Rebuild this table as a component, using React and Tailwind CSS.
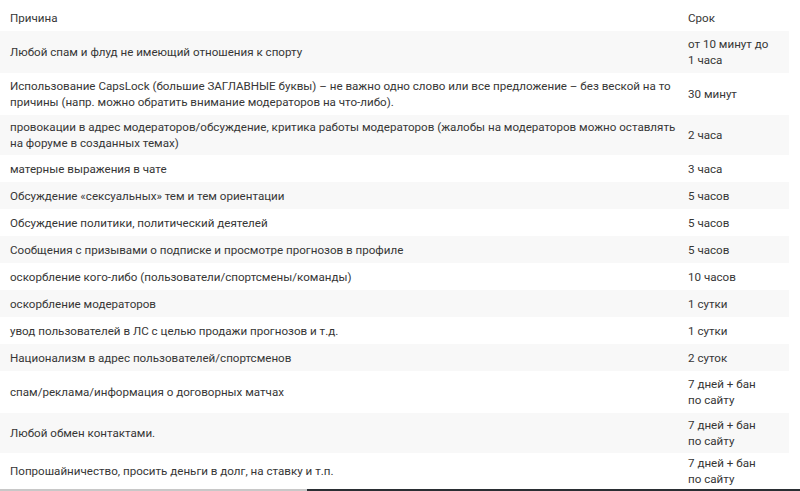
import React from "react";

const rows = [
  ["Любой спам и флуд не имеющий отношения к спорту", "от 10 минут до 1 часа", "h-[42px]"],
  ["Использование CapsLock (большие ЗАГЛАВНЫЕ буквы) – не важно одно слово или все предложение – без веской на то причины (напр. можно обратить внимание модераторов на что-либо).", "30 минут", "h-[42px]"],
  ["провокации в адрес модераторов/обсуждение, критика работы модераторов (жалобы на модераторов можно оставлять на форуме в созданных темах)", "2 часа", "h-[40px]"],
  ["матерные выражения в чате", "3 часа", "h-[27px]"],
  ["Обсуждение «сексуальных» тем и тем ориентации", "5 часов", "h-[27px]"],
  ["Обсуждение политики, политический деятелей", "5 часов", "h-[27px]"],
  ["Сообщения с призывами о подписке и просмотре прогнозов в профиле", "5 часов", "h-[27px]"],
  ["оскорбление кого-либо (пользователи/спортсмены/команды)", "10 часов", "h-[27px]"],
  ["оскорбление модераторов", "1 сутки", "h-[27px]"],
  ["увод пользователей в ЛС с целью продажи прогнозов и т.д.", "1 сутки", "h-[27px]"],
  ["Национализм в адрес пользователей/спортсменов", "2 суток", "h-[27px]"],
  ["спам/реклама/информация о договорных матчах", "7 дней + бан по сайту", "h-[42px]"],
  ["Любой обмен контактами.", "7 дней + бан по сайту", "h-[40px]"],
  ["Попрошайничество, просить деньги в долг, на ставку и т.п.", "7 дней + бан по сайту", "h-[36px]"],
];

export default function App() {
  return (
    <div className="w-[800px] h-[491px] overflow-hidden bg-white flex flex-col font-['Roboto',sans-serif] text-[11.6px] leading-[16px] text-[#363636]">
      <div className="flex-1 overflow-hidden">
        <table className="w-[789px] table-fixed border-collapse">
          <colgroup>
            <col className="w-[678px]" />
            <col className="w-[111px]" />
          </colgroup>
          <thead>
            <tr className="h-[31px]">
              <th className="text-left font-normal align-middle pl-[10px] pr-0 pt-[4px] pb-0">Причина</th>
              <th className="text-left font-normal align-middle pl-[10px] pr-[20px] pt-[4px] pb-0">Срок</th>
            </tr>
          </thead>
          <tbody>
            {rows.map((r, i) => (
              <tr key={i} className={(i % 2 === 0 ? "bg-[#f8f8f8] " : "bg-white ") + r[2]}>
                <td className="align-middle pl-[10px] pr-0 py-0">{r[0]}</td>
                <td className="align-middle pl-[10px] pr-[20px] py-0">{r[1]}</td>
              </tr>
            ))}
          </tbody>
        </table>
      </div>
      <div className="h-[2px] flex shrink-0">
        <div className="w-[307px] bg-[#c8c8c8]" />
        <div className="flex-1 bg-[#2a2e33]" />
      </div>
    </div>
  );
}
